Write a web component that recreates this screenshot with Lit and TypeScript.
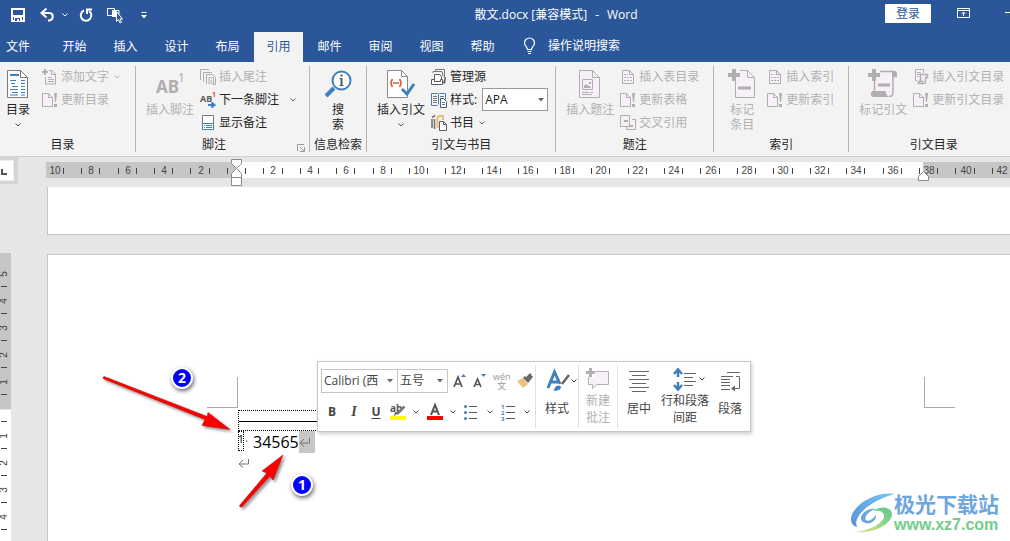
import { LitElement, html, svg, css, TemplateResult } from "lit";
import { customElement, property } from "lit/decorators.js";
import { classMap } from "lit/directives/class-map.js";

const OFF = "#b1adb1";
const PALE = "#f8f0f8";
const INK = "#5c5c5c";
const BLUE = "#3f7fbf";

type Icon = { w: number; h: number; art: TemplateResult };

const pageMark = svg`
  <path d="M.5 1.5h6l4 4v9H.5z" fill=${PALE} stroke=${OFF}/><path d="M6.5 1.5v4h4" fill="none" stroke=${OFF}/>
  <path d="M12 1h3l-1 9h-1zM12 12h3v3h-3z" fill=${OFF}/>`;
const listPage = svg`
  <path d="M2.5 1.5h7l4 4v9h-11z" fill=${PALE} stroke=${OFF}/><path d="M9.5 1.5v4h4" fill="none" stroke=${OFF}/>
  <path d="M4 5.500h4M4 8.500h8M4 11.500h8" stroke=${OFF} stroke-dasharray="2 1"/>`;

const icons: Record<string, Icon> = {
  save: { w: 14, h: 14, art: svg`<path d="M1 1h12v12H1z" fill="none" stroke="#fff" stroke-width="2"/><path d="M1 7h12v2H1zM3 9h8v4H3z" fill="#fff"/><path d="M4 10h5v3H4z" fill="#2b579a"/><path d="M6 11h2v2H6z" fill="#fff"/>` },
  undo: { w: 15, h: 14, art: svg`<path d="M2 5h7c5 0 5 7 0 7.500H8" fill="none" stroke="#fff" stroke-width="2"/><path d="M6.500.500L1.500 5l5 4.500" fill="none" stroke="#fff" stroke-width="2"/>` },
  redo: { w: 14, h: 14, art: svg`<path d="M5 2.500A5.300 5.300 0 1 0 10 3" fill="none" stroke="#fff" stroke-width="2"/><path d="M8 6V1.500h5" fill="none" stroke="#fff" stroke-width="2"/>` },
  touch: { w: 16, h: 17, art: svg`<path d="M6 8.500H.500v-7h7v2M12 7V3.500H9" fill="none" stroke="#fff"/><path d="M5 3h4v7H5z" fill="#fff"/><path d="M9.500 4.500v10l2-2 1.500 3.500 1.500-.800-1.500-3.200h2.500z" fill="#2b579a" stroke="#fff"/>` },
  more: { w: 6, h: 7, art: svg`<path d="M.500.500h5" stroke="#fff"/><path d="M0 3h6L3 6.500z" fill="#fff"/>` },
  chev: { w: 6, h: 4, art: svg`<path d="M.500.500L3 3 5.500.500" fill="none" stroke="currentColor"/>` },
  drop: { w: 6, h: 4, art: svg`<path d="M0 0h6L3 3.500z" fill="#666"/>` },
  display: { w: 13, h: 11, art: svg`<path d="M.500.500h12v9H.500zM1 2.500h11M6.500 8V4M4.500 6l2-2 2 2" fill="none" stroke="#fff"/>` },
  minimize: { w: 10, h: 11, art: svg`<path d="M0 4.500h10" stroke="#fff"/>` },
  bulb: { w: 11, h: 16, art: svg`<path d="M3.500 11.500c0-2.500-3-3.500-3-6.500a5 5 0 0 1 10 0c0 3-3 4-3 6.500zM3.500 13.500h4M4 15.500h3" fill="none" stroke="#fff" stroke-width="1.200"/>` },
  toc: { w: 22, h: 28, art: svg`<path d="M.500.500h13l7 7v20H.500z" fill="#fff" stroke="#7a7a7a"/><path d="M13.500.500v7h7" fill="none" stroke="#7a7a7a"/><path d="M3 5h9" stroke=${BLUE} stroke-width="2"/><path d="M3 10.500h6M4 13.500h4M5 16.500h6M3 19.500h8M5 22.500h6M3 25h8M14 10.500h4M14 13.500h4M14 16.500h4M14 19.500h4M14 22.500h4M14 25h4" stroke=${BLUE}/>` },
  addText: { w: 16, h: 16, art: svg`<path d="M3 0v6M0 3h6" stroke=${OFF} stroke-width="2"/><path d="M7 1.500h3l3.500 3.500v10h-10V8" fill=${PALE} stroke=${OFF}/><path d="M9.500 1.500v4h4M6 8.500h4M6 10.500h6M6 12.500h6" fill="none" stroke=${OFF}/>` },
  update: { w: 16, h: 16, art: pageMark },
  endnote: { w: 16, h: 16, art: svg`<path d="M.500 11V.500H9M3.500 13V3.500H12" fill="none" stroke=${OFF}/><path d="M6.500 15V5.500h6l3 3v7H13M10.500 8.500H9v6h1.500M12 8.500h1.500v6H12M11.200 9v1M11.200 11v3" fill="none" stroke=${OFF}/>` },
  next: { w: 16, h: 16, art: svg`<text x="0" y="10" font-family="Noto Sans, sans-serif" font-size="9" font-weight="700" fill="#5c5c5c">AB</text><text x="12" y="5" font-family="Noto Sans, sans-serif" font-size="7" font-weight="700" fill="#d9532c">1</text><path d="M8 13h5M11.500 10.500L14.500 13l-3 2.500" fill="none" stroke=${BLUE} stroke-width="2"/>` },
  show: { w: 16, h: 16, art: svg`<path d="M2.500 9V.500h11V9" fill="#fff" stroke="#777"/><path d="M2.500 8.500h11v6h-11z" fill="#fff" stroke=${BLUE}/><path d="M4 10.500h1M6 10.500h6M4 12.500h1M6 12.500h6" stroke=${BLUE}/>` },
  footnote: { w: 28, h: 28, art: svg`<text x="0" y="23" font-family="Noto Sans, sans-serif" font-size="17" font-weight="700" fill=${OFF}>AB</text><text x="22" y="12" font-family="Noto Sans, sans-serif" font-size="12" fill=${OFF}>1</text>` },
  search: { w: 28, h: 28, art: svg`<path d="M10 18L2 26" stroke=${BLUE} stroke-width="4"/><circle cx="17.500" cy="10.500" r="9" fill="#fff" stroke=${BLUE} stroke-width="2"/><path d="M16.500 4.500h2v2h-2zM15.500 8h3v7h1v1h-4v-1h1V9h-1z" fill="#555"/>` },
  citation: { w: 28, h: 28, art: svg`<path d="M.500.500h14l6 6v21H.500z" fill="#fff" stroke="#8a8a8a"/><path d="M14.500.500v6h6" fill="none" stroke="#8a8a8a"/><path d="M5.500 9q-3 4 0 8M12.500 9q3 4 0 8M6 13h6" fill="none" stroke="#d9623a" stroke-width="1.700"/><path d="M15 19l5 5 7-10" fill="none" stroke=${BLUE} stroke-width="3"/>` },
  sources: { w: 16, h: 16, art: svg`<path d="M4.500 3V.500h9V9M2 4V2.500h9l1 5" fill="none" stroke="#777"/><path d="M3.500 11V5.500h5l2 2V11" fill="#fff" stroke=${INK}/><path d="M.500 10.500h3v2h6v-2h2v5H.500z" fill="#fff" stroke=${INK}/><path d="M12 14l2-6 1 1-1 6z" fill=${INK}/>` },
  style: { w: 16, h: 16, art: svg`<path d="M.500 1.500h6l1 1 1-1h6v6M.500 1.500v12h6M7.500 2.500v10" fill="none" stroke=${BLUE}/><path d="M2 4.500h4M2 6.500h4M2 8.500h4M2 10.500h4M9 4.500h4" stroke="#777"/><path d="M9.500 6.500h3l3 3v6h-6z" fill="#fff" stroke=${INK}/><path d="M11 10.500h3M11 12.500h3" stroke=${BLUE}/>` },
  books: { w: 16, h: 16, art: svg`<path d="M1 4v9M3.500 4v10M1 2.500l3-2" fill="none" stroke="#777" stroke-width="1.600"/><path d="M6 3l2-2h4v4M6.500 3v10" fill="none" stroke="#e8bd79" stroke-width="2"/><path d="M8.500 6.500h4l3 3v6h-7z" fill="#fff" stroke=${INK}/><path d="M12.500 6.500v3h3" fill="none" stroke=${INK}/>` },
  caption: { w: 22, h: 28, art: svg`<path d="M.500.500h13l7 7v20H.500z" fill=${PALE} stroke=${OFF}/><path d="M13.500.500v7h7M3.500 9.500h10v10h-10z" fill="none" stroke=${OFF}/><path d="M5 18v-2l2-2 2 2 1-1 2 3zM10 12h2v2h-2z" fill=${OFF}/><path d="M3 22.500h7M11 22.500h3M3 24.500h10" stroke=${OFF}/>` },
  list: { w: 16, h: 16, art: listPage },
  cross: { w: 16, h: 16, art: svg`<path d="M.500.500h9v11h-9z" fill=${PALE} stroke=${OFF}/><path d="M12 4.500h3.500v10h-9V12" fill="none" stroke=${OFF}/><path d="M4 6h4M9 11h4" stroke=${OFF} stroke-width="2"/>` },
  markEntry: { w: 28, h: 28, art: svg`<path d="M7.500.500h12l7 7v20h-19z" fill=${PALE} stroke=${OFF}/><path d="M19.500.500v7h7" fill="none" stroke=${OFF}/><path d="M0 0h12v11H0z" fill="#f3f3f3"/><path d="M6-1v12M0 5h12" stroke=${OFF} stroke-width="4"/><path d="M10 18h13" stroke=${OFF} stroke-width="3"/>` },
  markCitation: { w: 28, h: 28, art: svg`<path d="M6 2h18v20q0 4-4 4H6z" fill=${PALE}/><path d="M9 1.500h16q3 0 2 5h-3v16q0 4-4 4M5.500 10v11" fill="none" stroke=${OFF} stroke-width="1.500"/><path d="M23 2q5-2 5 5h-5z" fill=${OFF}/><path d="M3 21h14q-1 3 3 6H4q-4-2-1-6z" fill=${OFF}/><path d="M0-1h11v11H0z" fill="#f3f3f3"/><path d="M5-1v12M-1 5h12" stroke=${OFF} stroke-width="4"/><path d="M9 15h12" stroke=${OFF} stroke-width="3"/>` },
  citeList: { w: 16, h: 16, art: svg`<path d="M4 11.500H2.500v-11h8V4" fill=${PALE} stroke=${OFF}/><path d="M4 3.500h4M4 5.500h3M4 7.500h2" stroke=${OFF}/><path d="M7.500 12V5.500h7v3h-2v4q0 2-2 2h-5v-2h5" fill=${PALE} stroke=${OFF} stroke-width="1.500"/>` },
  launch: { w: 8, h: 8, art: svg`<path d="M.500 7V.500H7M3 3l4 4M7.500 3v4.500H3" fill="none" stroke="#999"/>` },
  grow: { w: 14, h: 16, art: svg`<path d="M1 14L5 4l4 10M2.500 11h5" fill="none" stroke="#555" stroke-width="1.700"/><path d="M8 4l2.500-3L13 4z" fill=${BLUE}/>` },
  shrink: { w: 14, h: 16, art: svg`<path d="M1 14l3.500-8L8 14M2.500 11.500h4" fill="none" stroke="#555" stroke-width="1.600"/><path d="M8 1h5l-2.500 3z" fill=${BLUE}/>` },
  painter: { w: 16, h: 16, art: svg`<path d="M0 8l6-3 5 6-5 4z" fill="#ecc27e"/><path d="M7 4l5 5M10 5l4-4M12 7l3-4" stroke="#666" stroke-width="2.500"/>` },
  highlight: { w: 16, h: 16, art: svg`<text x="0" y="8" font-family="Noto Sans, sans-serif" font-size="10" font-weight="700" fill="#555">ab</text><path d="M14.500 2.500L7 10" stroke="#777" stroke-width="2.500"/><path d="M4 12l4-3-3-1z" fill="#555"/><path d="M0 12h16v4H0z" fill="#ffff00"/>` },
  color: { w: 16, h: 16, art: svg`<path d="M4 11L8 1l4 10M5.500 7.500h5" fill="none" stroke="#555" stroke-width="2"/><path d="M0 12h16v4H0z" fill="#ff0000"/>` },
  bullets: { w: 14, h: 16, art: svg`<circle cx="1.500" cy="2.500" r="1.500" fill=${BLUE}/><circle cx="1.500" cy="8.500" r="1.500" fill=${BLUE}/><circle cx="1.500" cy="14.500" r="1.500" fill=${BLUE}/><path d="M5 2.500h8M5 8.500h8M5 14.500h8" stroke="#555"/>` },
  numbers: { w: 15, h: 16, art: svg`<g font-family="Noto Sans, sans-serif" font-size="6" font-weight="700" fill=${BLUE}><text x="0" y="5">1</text><text x="0" y="11">2</text><text x="0" y="17">3</text></g><path d="M5 2.500h9M5 8.500h9M5 14.500h9" stroke="#555"/>` },
  styles: { w: 24, h: 24, art: svg`<path d="M2 19L8.500 3 14 15M5 13h7" fill="none" stroke=${BLUE} stroke-width="3"/><path d="M23 6l-7 9" stroke="#666" stroke-width="2.500"/><path d="M7 22q2-7 7-6 3 2 0 5-3 2-7 1z" fill=${BLUE} stroke="#fff"/>` },
  comment: { w: 24, h: 24, art: svg`<path d="M2.500 4.500h20v13H11l-4.500 4v-4h-4z" fill=${PALE} stroke=${OFF}/><path d="M0 0h9v10H0z" fill="#fff"/><path d="M4.500 1v9M0 5.500h9" stroke=${OFF} stroke-width="3"/>` },
  center: { w: 22, h: 24, art: svg`<path d="M1 2.500h20M4 6.500h14M1 10.500h20M4 14.500h14M1 18.500h20M4 22.500h14" stroke="#666"/>` },
  spacing: { w: 24, h: 24, art: svg`<path d="M5 4v6M5 15v6M1 7l4-4.500L9 7M1 18l4 4.500L9 18" fill="none" stroke=${BLUE} stroke-width="2.500"/><path d="M11 6.500h12M11 10.500h9M11 14.500h12M11 18.500h9" stroke="#666"/>` },
  paragraph: { w: 20, h: 24, art: svg`<path d="M7 3.500h13M1 7.500h12M1 10.500h9M1 13.500h9M1 16.500h9M1 20.500h9M16 7.500h3.500v12H13" fill="none" stroke="#666"/><path d="M11 19.500l4-3v6z" fill="#666"/>` },
  enter: { w: 12, h: 10, art: svg`<path d="M10.500 1v5h-9M5 2L1 6l4 3.500" fill="none" stroke="#777"/>` },
};

const icon = (name: string) => {
  const i = icons[name];
  return html`<svg class="icon" width=${i.w} height=${i.h} viewBox="0 0 ${i.w} ${i.h}" aria-hidden="true">${i.art}</svg>`;
};

const shared = css`
  :host { display: block; font: 12px/16px "Open Sans", "Noto Sans CJK SC", sans-serif; color: #262626; }
  * { box-sizing: border-box; }
  button, select { font: inherit; color: inherit; background: none; border: 0; margin: 0; padding: 0; white-space: nowrap; }
  .icon { display: block; flex: none; overflow: visible; }
`;

type Small = { icon: string; text: string; off?: boolean; menu?: boolean; kind?: string };
type Group = { id: string; title: string; large: string[]; icon: string; off?: boolean; menu?: boolean; rows: Small[] };

const groups: Group[] = [
  { id: "toc", title: "目录", large: ["目录"], icon: "toc", menu: true, rows: [
    { icon: "addText", text: "添加文字", off: true, menu: true }, { icon: "update", text: "更新目录", off: true }] },
  { id: "notes", title: "脚注", large: ["插入脚注"], icon: "footnote", off: true, rows: [
    { icon: "endnote", text: "插入尾注", off: true }, { icon: "next", text: "下一条脚注", menu: true }, { icon: "show", text: "显示备注" }] },
  { id: "research", title: "信息检索", large: ["搜", "索"], icon: "search", rows: [] },
  { id: "biblio", title: "引文与书目", large: ["插入引文"], icon: "citation", menu: true, rows: [
    { icon: "sources", text: "管理源" }, { icon: "style", text: "样式:", kind: "select" }, { icon: "books", text: "书目", menu: true }] },
  { id: "captions", title: "题注", large: ["插入题注"], icon: "caption", off: true, rows: [
    { icon: "list", text: "插入表目录", off: true }, { icon: "update", text: "更新表格", off: true }, { icon: "cross", text: "交叉引用", off: true }] },
  { id: "index", title: "索引", large: ["标记", "条目"], icon: "markEntry", off: true, rows: [
    { icon: "list", text: "插入索引", off: true }, { icon: "update", text: "更新索引", off: true }] },
  { id: "authority", title: "引文目录", large: ["标记引文"], icon: "markCitation", off: true, rows: [
    { icon: "citeList", text: "插入引文目录", off: true }, { icon: "update", text: "更新引文目录", off: true }] },
];

@customElement("word-ribbon")
class WordRibbon extends LitElement {
  static styles = [shared, css`
    .ribbon { display: flex; background: #f3f3f3; border-bottom: 1px solid #d0d0d0; padding: 4px 0; overflow: hidden; }
    .group { flex: none; display: flex; flex-direction: column; border-right: 1px solid #b5b5b5; }
    .body { display: flex; align-items: flex-start; gap: 6px; height: 72px; padding: 0 14px 0 10px; }
    .toc .body { padding: 0 15px 0 6px; gap: 12px; }
    .notes .body { padding-right: 13px; }
    .research .body { padding: 0 14px; justify-content: center; }
    .research .title { padding: 0 4px; }
    .biblio .body { padding-right: 7px; }
    .index .body { padding-left: 14px; gap: 11px; }
    .authority { border-right: 0; }
    .large { display: flex; flex-direction: column; align-items: center; padding-top: 4px; line-height: 15px; }
    .large .icon { margin-bottom: 4px; }
    .large .arrow { padding-top: 6px; color: #555; }
    .off { color: #b1b1b1; }
    .rows { display: flex; flex-direction: column; margin-top: -1px; }
    .row { display: flex; align-items: center; gap: 3px; height: 23px; }
    .row .arrow { padding-left: 2px; color: #666; }
    .off .arrow { color: #b1b1b1; }
    .notes .row .arrow { padding-left: 8px; }
    .title { display: flex; justify-content: center; height: 14px; line-height: 14px; }
    .toc .title { padding-right: 10px; }
    .notes .title { padding-left: 66px; }
    .launch { margin: 5px 4px 0 auto; }
    .picker { display: flex; align-items: center; position: relative; margin-left: 2px; }
    .picker select { appearance: none; width: 66px; height: 23px; border: 1px solid #999; background: #fff; padding-left: 2px; }
    .picker .icon { position: absolute; right: 4px; pointer-events: none; }
  `];

  row(r: Small) {
    if (r.kind === "select") return html`<div class="row">${icon(r.icon)}<label for="citation-style">${r.text}</label>
      <span class="picker"><select id="citation-style"><option>APA</option></select>${icon("drop")}</span></div>`;
    return html`<button class=${classMap({ row: true, off: !!r.off })} ?disabled=${r.off}>${icon(r.icon)}<span>${r.text}</span>
      ${r.menu ? html`<span class="arrow">${icon("chev")}</span>` : null}</button>`;
  }

  render() {
    return html`<div class="ribbon">${groups.map((g) => html`
      <section class="group ${g.id}">
        <div class="body">
          <button class=${classMap({ large: true, off: !!g.off })} ?disabled=${g.off}>
            ${icon(g.icon)}${g.large.map((t) => html`<span>${t}</span>`)}
            ${g.menu ? html`<span class="arrow">${icon("chev")}</span>` : null}
          </button>
          ${g.rows.length ? html`<div class="rows">${g.rows.map((r) => this.row(r))}</div>` : null}
        </div>
        <div class="title"><span>${g.title}</span>
          ${g.id === "notes" ? html`<button class="launch" aria-label="脚注和尾注">${icon("launch")}</button>` : null}</div>
      </section>`)}</div>`;
  }
}

@customElement("mini-toolbar")
class MiniToolbar extends LitElement {
  static styles = [shared, css`
    .bar { display: flex; width: max-content; height: 71px; background: #fff; border: 1px solid #c6c6c6; box-shadow: 1px 2px 4px #0003; color: #444; padding: 3px 0 3px 3px; }
    .format { display: flex; flex-direction: column; width: 215px; border-right: 1px solid #e1e1e1; }
    .line { display: flex; align-items: center; height: 32px; }
    .line.top { padding-top: 1px; gap: 6px; }
    .fonts { display: flex; }
    .picker { display: flex; align-items: center; position: relative; margin-right: -1px; }
    .picker select { appearance: none; height: 24px; border: 1px solid #c6c6c6; background: #fff; padding-left: 2px; }
    .family select { width: 77px; }
    .size select { width: 51px; }
    .picker .icon { position: absolute; right: 5px; pointer-events: none; }
    .bottom button { width: 22px; }
    .bottom .wide { width: 37px; display: flex; align-items: center; justify-content: space-between; padding: 0 5px 0 3px; }
    .b { font-weight: 700; } .i { font-style: italic; font-weight: 700; font-family: "Liberation Serif", serif; font-size: 14px; } .u { font-weight: 700; text-decoration: underline; text-underline-offset: 2px; }
    .pinyin { display: flex; flex-direction: column; align-items: center; font-size: 9px; line-height: 9px; color: #999; }
    .cmd { display: flex; flex-direction: column; align-items: center; padding-top: 3px; line-height: 17px; }
    .cmd .top { display: flex; align-items: center; height: 26px; }
    .cmd .one { padding-top: 6px; }
    .style { width: 43px; border-right: 1px solid #e1e1e1; }
    .style .top { gap: 1px; padding-left: 8px; }
    .note { width: 39px; border-right: 1px solid #e1e1e1; color: #b1b1b1; padding-top: 1px; }
    .mid { width: 42px; }
    .space { width: 50px; padding-top: 1px; }
    .space .top { gap: 2px; padding-left: 8px; }
    .para { width: 40px; }
  `];

  render() {
    return html`<div class="bar">
      <div class="format">
        <div class="line top">
          <div class="fonts">
            <span class="picker family"><select aria-label="字体"><option>Calibri (西</option></select>${icon("drop")}</span>
            <span class="picker size"><select aria-label="字号"><option>五号</option></select>${icon("drop")}</span>
          </div>
          <button aria-label="增大字号">${icon("grow")}</button>
          <button aria-label="减小字号">${icon("shrink")}</button>
          <button class="pinyin"><span>wén</span><span>文</span></button>
          <button aria-label="格式刷">${icon("painter")}</button>
        </div>
        <div class="line bottom">
          <button class="b">B</button><button class="i">I</button><button class="u">U</button>
          ${["highlight", "color", "bullets", "numbers"].map((n) => html`<button class="wide" aria-label=${n}>${icon(n)}${icon("chev")}</button>`)}
        </div>
      </div>
      <button class="cmd style"><span class="top">${icon("styles")}${icon("chev")}</span><span class="one">样式</span></button>
      <button class="cmd note" disabled><span class="top">${icon("comment")}</span><span>新建</span><span>批注</span></button>
      <button class="cmd mid"><span class="top">${icon("center")}</span><span class="one">居中</span></button>
      <button class="cmd space"><span class="top">${icon("spacing")}${icon("chev")}</span><span>行和段落</span><span>间距</span></button>
      <button class="cmd para"><span class="top">${icon("paragraph")}</span><span class="one">段落</span></button>
    </div>`;
  }
}

@customElement("word-ruler")
class WordRuler extends LitElement {
  @property({ type: Boolean }) vertical = false;
  static styles = [shared, css`
    svg { display: block; overflow: hidden; }
    .across { width: 100%; height: 30px; }
    .down { width: 12px; height: 100%; }
    text { font: 10px "Liberation Sans", sans-serif; fill: #444; text-anchor: middle; }
    .tick { stroke: #444; }
    .marker { fill: #fff; stroke: #8a8a8a; }
  `];

  across() {
    const zero = 190;
    const at = (chars: number) => zero + Math.round((chars * 255) / 14);
    const evens = Array.from({ length: 27 }, (_, i) => (i - 5) * 2);
    return html`<svg class="across">
      <rect x="0" y="5" width="100%" height="16" fill="#c6c6c6"/><rect x=${zero} y="5" width="687" height="16" fill="#fff"/>
      ${evens.map((n) => svg`${n ? svg`<text x=${at(n) + 1} y="17">${Math.abs(n)}</text>` : null}
        <path class="tick" d="M${at(n - 0.5) + 0.5} 11v6M${at(n + 0.5) + 0.5} 11v6"/>`)}
      <path class="marker" d="M185.500 2.500h10v4l-5 5-5-5zM190.500 11.500l5 5v4h-10v-4zM185.500 20.500h10v8h-10z"/>
      <path class="marker" d="M877.500 14.500l5 5v4h-10v-4z"/>
    </svg>`;
  }

  down() {
    const marks = [-5, -4, -3, -2, -1, 0, 1, 2, 3, 4, 5];
    return html`<svg class="down">
      <rect width="11" height="156" fill="#c6c6c6"/><rect y="157" width="11" height="100%" fill="#fff"/>
      ${marks.map((n) => {
        const y = 155 + n * 27;
        return svg`${n ? svg`<text x="4" y=${y + 4} transform="rotate(-90 4 ${y + 1})">${Math.abs(n)}</text>` : null}
          <path class="tick" d="M1 ${y + 13.5}h6"/>`;
      })}</svg>`;
  }

  render() { return this.vertical ? this.down() : this.across(); }
}

const tabs = ["文件", "开始", "插入", "设计", "布局", "引用", "邮件", "审阅", "视图", "帮助"];

@customElement("app-root")
class AppRoot extends LitElement {
  static styles = [shared, css`
    :host { height: 100vh; overflow: hidden; }
    .app { display: flex; flex-direction: column; height: 100%; }
    .head { background: #2b579a; color: #fff; }
    .bar { display: flex; align-items: center; height: 30px; margin-bottom: 2px; }
    .quick { display: flex; align-items: center; width: 227px; padding-left: 11px; }
    .undo { margin-left: 15px; } .undoMenu { margin-left: 7px; } .redo { margin-left: 11px; } .touch { margin-left: 14px; } .more { margin-left: 18px; }
    .name { flex: 1; display: flex; justify-content: center; gap: 8px; }
    .login { align-self: flex-start; width: 46px; height: 19px; margin-top: 4px; background: #fff; color: #2b579a; border-radius: 1px; }
    .window { align-self: flex-start; display: flex; gap: 35px; width: 79px; padding: 8px 0 0 26px; overflow: hidden; }
    .tabs { display: flex; height: 30px; }
    .tab { width: 51px; line-height: 28px; flex: none; }
    .tab.first { width: 49px; text-align: left; padding-left: 6px; }
    .tab.on { background: #f3f3f3; color: #2b579a; width: 49px; margin: 0 1px; }
    .ask { display: flex; align-items: center; gap: 13px; margin-left: 16px; height: 28px; }
    .work { flex: 1; min-height: 0; display: grid; grid-template-columns: 46px 1fr; background: #e6e6e6; overflow: hidden; position: relative; }
    .side { display: flex; flex-direction: column; }
    .corner { width: 18px; height: 27px; background: #d4d4d4; padding: 3px 4px 3px 0; }
    .stop { display: block; width: 14px; height: 21px; background: #fff; border: 1px solid #eee; border-left: 0; }
    .side word-ruler { flex: 1; margin-top: 69px; }
    .pages { min-width: 0; display: flex; flex-direction: column; }
    .page { margin-left: 1px; background: #fff; border: 1px solid #c6c6c6; border-right: 0; }
    .prev { height: 48px; border-top: 0; margin-bottom: 19px; }
    .current { flex: 1; padding: 122px 55px 0 159px; border-bottom: 0; }
    .crops { display: flex; justify-content: space-between; height: 31px; }
    .crop { width: 31px; border: solid #aaa; border-width: 0 1px 1px 0; }
    .crop.right { border-width: 0 0 1px 1px; }
    .notes { margin: 2px 55px 0 31px; font-size: 16px; color: #000; }
    .rule { width: 160px; height: 21px; border: 1px dotted #000; border-right: 0; padding-top: 10px; }
    .rule hr { margin: 0; border: 0; border-top: 1px solid #000; }
    .note { display: flex; align-items: flex-start; height: 22px; line-height: 22px; }
    .ref { width: 6px; height: 20px; border: 1px dotted #000; font-size: 11px; line-height: 13px; display: flex; justify-content: center; }
    .dot { width: 9px; color: #888; padding-left: 1px; font-size: 12px; }
    .mark { background: #c6c6c6; width: 16px; height: 22px; padding-top: 6px; }
    .blank { padding-top: 5px; }
    .mini { position: absolute; left: 317px; top: 204px; }
    .arrows { position: absolute; left: 90px; top: 203px; }
    .badge { position: absolute; width: 22px; height: 22px; border-radius: 50%; border: 2px solid #fff; background: #0000ff; color: #fff; box-shadow: 1px 2px 4px #0009; text-align: center; font: 700 14px/18px "Noto Sans", sans-serif; }
    .two { left: 171px; top: 210px; } .one { left: 291px; top: 317px; }
    .site { position: absolute; right: 11px; bottom: 6px; display: flex; align-items: center; text-decoration: none; }
    .words { display: flex; flex-direction: column; color: #6ea6de; font: 700 21px/24px "Noto Sans CJK SC", sans-serif; }
    .url { color: #72cc8c; font: 700 16px/20px "Liberation Sans", sans-serif; }
  `];

  render() {
    return html`<div class="app">
      <header class="head">
        <div class="bar">
          <div class="quick">
            <button aria-label="保存">${icon("save")}</button>
            <button class="undo" aria-label="撤消">${icon("undo")}</button>
            <button class="undoMenu" aria-label="撤消列表">${icon("chev")}</button>
            <button class="redo" aria-label="重复">${icon("redo")}</button>
            <button class="touch" aria-label="触摸/鼠标模式">${icon("touch")}</button>
            <button class="more" aria-label="自定义快速访问工具栏">${icon("more")}</button>
          </div>
          <div class="name"><span>散文.docx [兼容模式]</span><span>-</span><span>Word</span></div>
          <button class="login">登录</button>
          <div class="window"><button aria-label="功能区显示选项">${icon("display")}</button><button aria-label="最小化">${icon("minimize")}</button></div>
        </div>
        <nav class="tabs">
          ${tabs.map((t, i) => html`<button class=${classMap({ tab: true, first: i === 0, on: t === "引用" })}>${t}</button>`)}
          <button class="ask">${icon("bulb")}<span>操作说明搜索</span></button>
        </nav>
      </header>
      <word-ribbon></word-ribbon>
      <main class="work">
        <div class="side">
          <div class="corner"><button class="stop" aria-label="制表符"><svg width="12" height="19" aria-hidden="true"><path d="M1 8v5h5" fill="none" stroke="#555" stroke-width="2"/></svg></button></div>
          <word-ruler vertical></word-ruler>
        </div>
        <div class="pages">
          <word-ruler></word-ruler>
          <div class="page prev"></div>
          <article class="page current">
            <div class="crops"><span class="crop"></span><span class="crop right"></span></div>
            <div class="notes">
              <div class="rule"><hr></div>
              <div class="note"><span class="ref">1</span><span class="dot">·</span><span>34565</span><span class="mark">${icon("enter")}</span></div>
              <div class="blank">${icon("enter")}</div>
            </div>
          </article>
        </div>
        <mini-toolbar class="mini"></mini-toolbar>
        <svg class="arrows" width="240" height="160" aria-hidden="true">
          <defs><filter id="shade" x="-20%" y="-20%" width="150%" height="150%"><feDropShadow dx="2" dy="2" stdDeviation="1.500" flood-opacity=".45"/></filter></defs>
          <g filter="url(#shade)" fill="#ff0000" stroke="#a01010" stroke-width=".500">
            <path d="M14 16.500q-2 1 0 2.500L115 59.500l-3 6 28 4-22-17-1 4z"/>
            <path d="M149.500 145.500q0 2 2.500 1.500l28-31 3 4L193 95l-21 16 5 2z"/>
          </g>
        </svg>
        <span class="badge two">2</span><span class="badge one">1</span>
        <a class="site" href="#">
          <svg width="43" height="40" viewBox="0 0 43 40" aria-hidden="true">
            <defs><linearGradient id="sky" x1="0" y1="1" x2="1" y2="0"><stop offset="0" stop-color="#5a8fd8"/><stop offset="1" stop-color="#6fc8f2"/></linearGradient>
            <linearGradient id="leaf" x1="0" y1="1" x2="1" y2="0"><stop offset="0" stop-color="#dce98a"/><stop offset="1" stop-color="#5cc48c"/></linearGradient></defs>
            <path d="M43 1C25-2 0 13 0 26c0 4 2 7 6 8-4-9 8-24 37-33z" fill="url(#sky)"/>
            <path d="M25 16c-11-2-19 9-13 13 7 4 14-2 13-7-4 5-8 7-10 5-3-3 4-10 10-11z" fill="#6aa5df"/>
            <path d="M22 18c7-6 19-4 19 3 0 10-18 20-37 18 18-2 30-10 29-17-1-4-5-5-11-4z" fill="url(#leaf)"/>
          </svg>
          <span class="words"><span>极光下载站</span><span class="url">www.xz7.com</span></span>
        </a>
      </main>
    </div>`;
  }
}
